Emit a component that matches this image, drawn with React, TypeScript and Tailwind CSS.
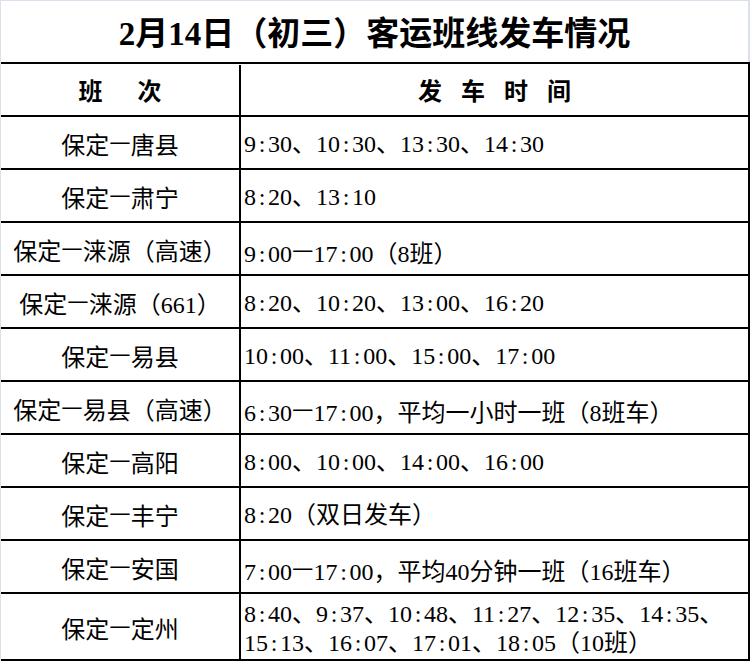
import React from "react";

const rows: { route: string; times: string[] }[] = [
  { route: "保定—唐县", times: ["9:30、10:30、13:30、14:30"] },
  { route: "保定—肃宁", times: ["8:20、13:10"] },
  { route: "保定—涞源（高速）", times: ["9:00—17:00（8班）"] },
  { route: "保定—涞源（661）", times: ["8:20、10:20、13:00、16:20"] },
  { route: "保定—易县", times: ["10:00、11:00、15:00、17:00"] },
  { route: "保定—易县（高速）", times: ["6:30—17:00，平均一小时一班（8班车）"] },
  { route: "保定—高阳", times: ["8:00、10:00、14:00、16:00"] },
  { route: "保定—丰宁", times: ["8:20（双日发车）"] },
  { route: "保定—安国", times: ["7:00—17:00，平均40分钟一班（16班车）"] },
  {
    route: "保定—定州",
    times: [
      "8:40、9:37、10:48、11:27、12:35、14:35、",
      "15:13、16:07、17:01、18:05（10班）"
    ]
  }
];

// colons get a half-width cell, dashes come from the CJK font
function T({ s }: { s: string }) {
  return (
    <span>
      {Array.from(s).map((c, i) =>
        c === ":" ? (
          <span key={i} className="inline-block w-[0.5em] text-center">
            :
          </span>
        ) : c === "—" ? (
          <span key={i} className="font-['Noto_Sans_CJK_SC',sans-serif] align-[0.17em]">
            —
          </span>
        ) : (
          <React.Fragment key={i}>{c}</React.Fragment>
        )
      )}
    </span>
  );
}

export default function App() {
  return (
    <div className="w-[750px] h-[661px] bg-white border-l border-t border-[#dbe1ec] font-['Liberation_Serif','Noto_Sans_CJK_SC',serif] text-black overflow-hidden">
      <div className="h-[61px] border-r-2 border-[#dbe1ec] flex items-center justify-center text-[33px] font-bold leading-none pt-[5px]">
        <T s="2月14日（初三）客运班线发车情况" />
      </div>

      <div className="border-t-2 border-black">
        <div className="flex h-[53px] border-b-2 border-r-2 border-black font-['Noto_Sans_CJK_SC',sans-serif] font-bold text-[24px] pt-[1px]">
          <div className="w-[240px] border-r-2 border-black flex items-center justify-center gap-[35px]">
            <span>班</span>
            <span>次</span>
          </div>
          <div className="flex-1 flex items-center justify-center gap-[19px]">
            <span>发</span>
            <span>车</span>
            <span>时</span>
            <span>间</span>
          </div>
        </div>

        {rows.map((r, idx) => {
          const last = idx === rows.length - 1;
          return (
            <div
              key={r.route}
              className={`flex border-b-2 border-r-2 border-black text-[24px] ${
                last ? "h-[67px]" : "h-[53px]"
              }`}
            >
              <div className="w-[240px] border-r-2 border-black flex items-center justify-center whitespace-nowrap pt-[2px]">
                <T s={r.route} />
              </div>
              <div className="flex-1 flex flex-col justify-center pl-[3px] pt-[4px] leading-[29px] whitespace-nowrap">
                {r.times.map((t) => (
                  <div key={t}>
                    <T s={t} />
                  </div>
                ))}
              </div>
            </div>
          );
        })}
      </div>
    </div>
  );
}
